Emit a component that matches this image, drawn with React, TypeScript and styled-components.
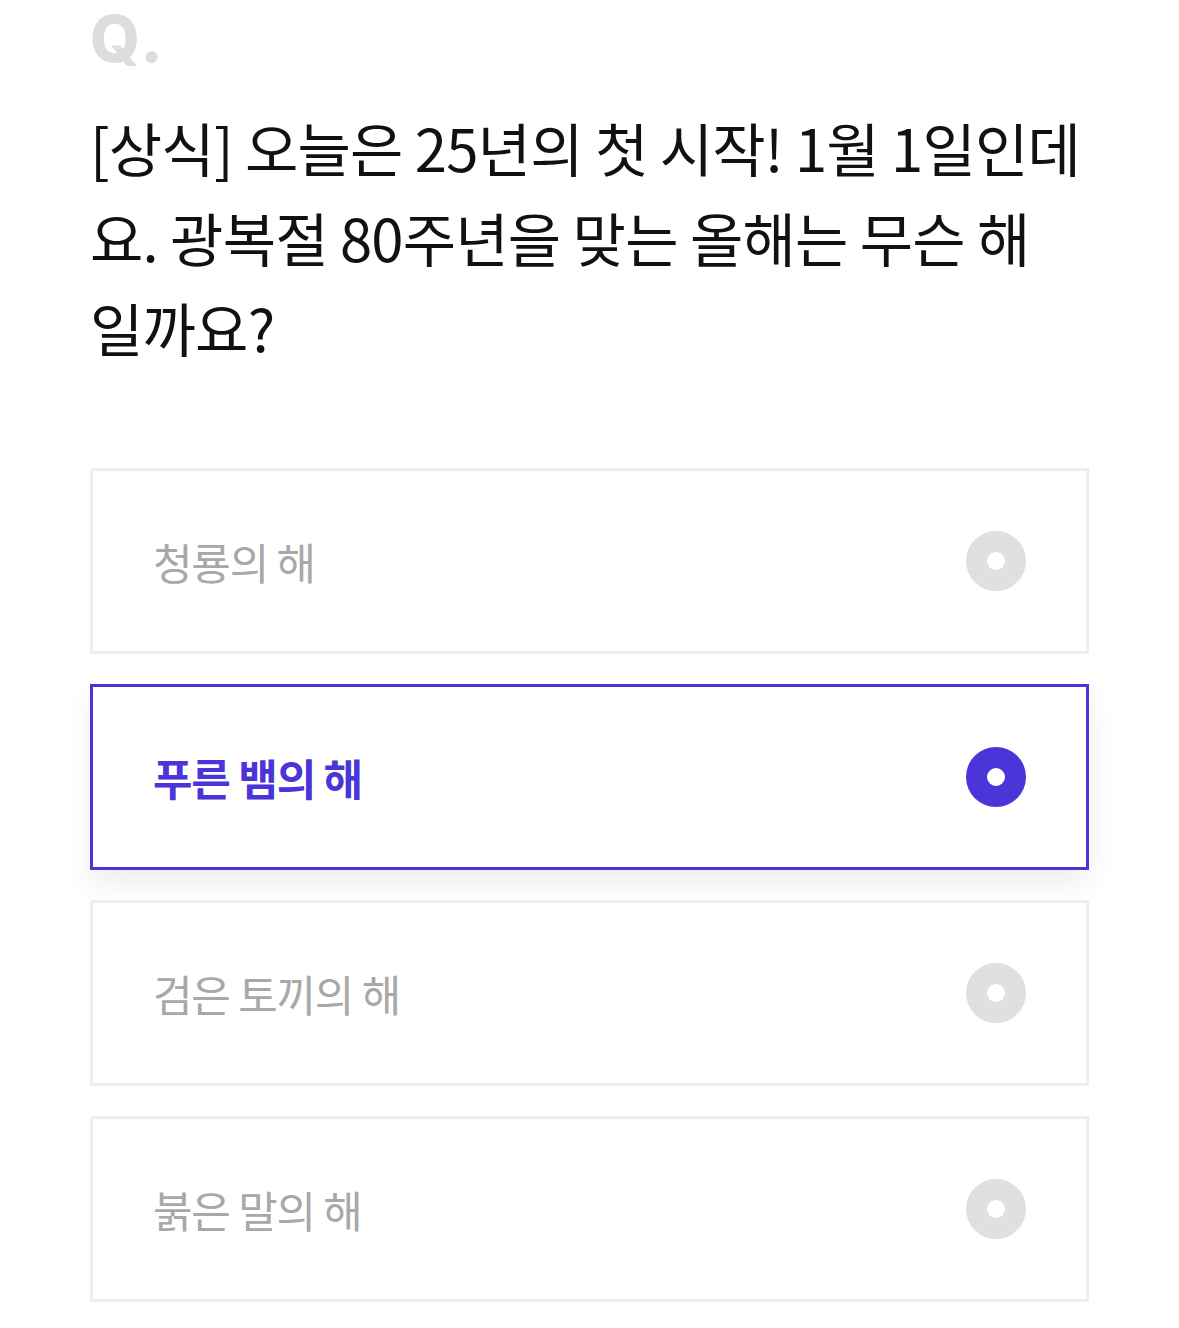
import React from "react";
import styled, { createGlobalStyle } from "styled-components";

const Global = createGlobalStyle`
  html, body { margin: 0; padding: 0; background: #fff; }
  body { font-family: "Noto Sans CJK KR", "Noto Sans", sans-serif; }
`;

const Page = styled.div`
  width: 999px;
  padding: 0 90px 27px 90px;
`;

const QMark = styled.div`
  font-family: "Inter", "Liberation Sans", sans-serif;
  font-weight: 800;
  font-size: 64px;
  line-height: normal;
  color: #dddddd;
  letter-spacing: 3px;
`;

const Question = styled.h1`
  margin: 25px 0 0 0;
  font-family: "Noto Sans CJK KR", sans-serif;
  font-weight: 400;
  font-size: 58px;
  line-height: 90px;
  letter-spacing: -0.8px;
  color: #111;
  word-break: break-all;
`;

const Options = styled.div`
  display: flex;
  flex-direction: column;
  gap: 30px;
  margin-top: 96px;
`;

const Option = styled.div<{ $selected?: boolean }>`
  height: 186px;
  box-sizing: border-box;
  display: flex;
  align-items: center;
  justify-content: space-between;
  padding: 0 60px 0 60px;
  border: 3px solid ${(p) => (p.$selected ? "#4b35d8" : "#eeeeee")};
  background: #fff;
  box-shadow: ${(p) => (p.$selected ? "0 14px 28px rgba(0,0,0,0.07)" : "none")};
`;

const Label = styled.span<{ $selected?: boolean }>`
  font-size: 43px;
  letter-spacing: -1.2px;
  font-weight: ${(p) => (p.$selected ? 600 : 400)};
  color: ${(p) => (p.$selected ? "#4b35d8" : "#a8a8a8")};
`;

const Radio = styled.span<{ $selected?: boolean }>`
  width: 60px;
  height: 60px;
  border-radius: 50%;
  background: ${(p) => (p.$selected ? "#4b35d8" : "#e0e0e0")};
  display: flex;
  align-items: center;
  justify-content: center;
  &::after {
    content: "";
    width: 18px;
    height: 18px;
    border-radius: 50%;
    background: #fff;
  }
`;

const options = ["청룡의 해", "푸른 뱀의 해", "검은 토끼의 해", "붉은 말의 해"];

export default function App() {
  return (
    <Page>
      <Global />
      <QMark>Q.</QMark>
      <Question>
        [상식] 오늘은 25년의 첫 시작! 1월 1일인데
        <br />
        요. 광복절 80주년을 맞는 올해는 무슨 해
        <br />
        일까요?
      </Question>
      <Options>
        {options.map((o, i) => (
          <Option key={o} $selected={i === 1}>
            <Label $selected={i === 1}>{o}</Label>
            <Radio $selected={i === 1} />
          </Option>
        ))}
      </Options>
    </Page>
  );
}
